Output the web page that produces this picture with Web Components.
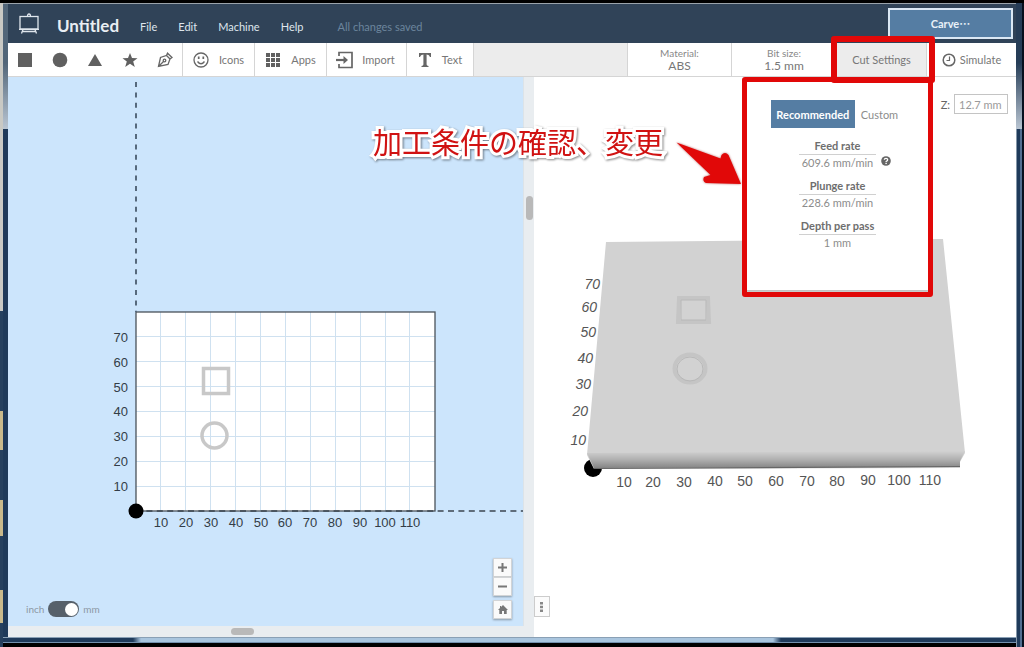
<!DOCTYPE html>
<html lang="en">
<head>
<meta charset="utf-8">
<title>Untitled</title>
<style>
html, body { margin: 0; height: 100%; }
body { background: #000; font-family: Lato, "Noto Sans CJK JP", sans-serif; font-size: 11px; color: #777; }
</style>
</head>
<body>
<carve-window>
  <app-header slot="header"></app-header>
  <tool-bar slot="toolbar"></tool-bar>
  <design-pane slot="design"></design-pane>
  <preview-pane slot="preview"></preview-pane>
</carve-window>

<script>
function define(name, html, setup) {
  const template = document.createElement('template');
  template.innerHTML = '<style>*{box-sizing:border-box}button,input{font:inherit;margin:0}:host{box-sizing:border-box}</style>' + html;
  customElements.define(name, class extends HTMLElement {
    constructor() {
      super();
      this.attachShadow({ mode: 'open' }).appendChild(template.content.cloneNode(true));
      if (setup) setup(this.shadowRoot, this);
    }
  });
}

/* Rate row of the cut settings panel */
define('rate-item', `
<style>
:host { display: block; width: 77px; text-align: center; font-size: 11px; line-height: 16px; color: #8c8c8c; position: relative; white-space: nowrap; }
dl, dt, dd { margin: 0; }
dt { font-weight: 700; color: #6e6e6e; border-bottom: 1px solid #d0d0d0; }
::slotted(button) { position: absolute; right: -15px; top: 18px; }
</style>
<dl><dt><slot name="label"></slot></dt><dd><slot></slot></dd></dl>
<slot name="help"></slot>`);

/* Panel that drops from the Cut Settings tool */
define('cut-panel', `
<style>
:host { display: flex; flex-direction: column; align-items: center; background: #fff; padding: 19px 0 42px; }
nav { display: flex; margin-bottom: 10px; }
nav button { height: 28px; border: 0; background: none; color: #8c8c8c; padding: 0 6px; }
nav button[aria-pressed=true] { background: #557da3; color: #fff; font-weight: 700; width: 84px; padding: 0; }
.rates { display: flex; flex-direction: column; gap: 7px; }
.help { border: 0; padding: 0; background: none; width: 10px; height: 10px; display: block; }
svg { display: block; }
</style>
<nav><button aria-pressed="true">Recommended</button><button aria-pressed="false">Custom</button></nav>
<div class="rates">
<rate-item><span slot="label">Feed rate</span>609.6 mm/min
<button slot="help" class="help" aria-label="Help"><svg width="10" height="10" viewBox="0 0 10 10"><circle cx="5" cy="5" r="4.8" fill="#666"/><path d="M3.3 3.8Q3.4 2.3 5 2.3T6.7 3.8Q6.7 4.7 5.2 5.5V6" fill="none" stroke="#fff" stroke-width="1.3"/><rect x="4.4" y="6.8" width="1.4" height="1.3" fill="#fff"/></svg></button></rate-item>
<rate-item><span slot="label">Plunge rate</span>228.6 mm/min</rate-item>
<rate-item><span slot="label">Depth per pass</span>1 mm</rate-item>
</div>`);

define('app-header', `
<style>
:host { display: flex; align-items: center; height: 39px; background: #304358; color: #e9eef3; padding: 0 3px 0 10px; }
.logo { display: block; margin-right: 17px; }
h1 { margin: 4px 0 0; font-size: 17px; line-height: 24px; font-weight: 700; color: #e9eef3; }
nav { display: flex; gap: 21px; margin: 6px 0 0 21px; }
nav button { border: 0; padding: 0; background: none; color: #dfe6ed; line-height: 16px; }
p { margin: 6px 0 0 34px; line-height: 16px; color: #6c859d; }
.carve { margin-left: auto; width: 125px; height: 31px; border: 2px solid #dbe8f4; background: #557da3; color: #e9f1f8; font-weight: 700; line-height: 16px; }
.carve span { font-family: "Noto Sans CJK JP", sans-serif; line-height: 1; }
</style>
<svg class="logo" width="22" height="22" viewBox="0 0 22 22" fill="none" stroke="#dfe6ed"><rect x="2" y="3.5" width="18" height="12.5" stroke-width="1.3"/><path d="M9.5 3.5Q9.5 1 11 1T12.5 3.5M1 16.3H21M5 16.5L3.5 20.5M17 16.5L18.5 20.5M4.5 18.5H17.5" stroke-width="1.3"/></svg>
<h1>Untitled</h1>
<nav><button>File</button><button>Edit</button><button>Machine</button><button>Help</button></nav>
<p>All changes saved</p>
<button class="carve">Carve<span lang="ja">…</span></button>`);

define('tool-bar', `
<style>
:host { display: flex; height: 34px; background: #ececec; border-bottom: 1px solid #d5d5d5; position: relative; z-index: 2; }
button { border: 0; border-right: 1px solid #d5d5d5; background: #fff; color: #777; padding: 0; display: flex; align-items: center; justify-content: center; white-space: nowrap; }
.shapes { display: flex; width: 175px; background: #fff; border-right: 1px solid #d5d5d5; }
.shapes button { flex: 1; border: 0; }
.icons, .apps { width: 72px; gap: 10px; }
.import { width: 80px; gap: 9px; padding-right: 2px; }
.text { width: 67px; gap: 10px; }
.setup, .bit { width: 105px; flex-direction: column; line-height: 14px; }
.setup { margin-left: auto; border-left: 1px solid #d5d5d5; }
small { font-size: 10px; line-height: 12px; color: #888; }
.setup b, .bit b { font-weight: 400; font-size: 12px; }
.cut { position: relative; width: 90px; display: flex; }
.cut > button { flex: 1; background: #ececec; }
cut-panel { position: absolute; top: 38px; right: -1px; width: 181px; height: 209px; box-shadow: 0 0 3px #8888; }
.mark { position: absolute; border: 6px solid #e10808; border-radius: 3px; pointer-events: none; }
.panel-mark { top: 34px; right: -6px; width: 191px; height: 220px; border-width: 5px; }
.tool-mark { top: -7px; right: -8px; width: 104px; height: 47px; }
.simulate { width: 89px; border: 0; gap: 4px; }
.note { position: absolute; right: 353px; top: 77px; margin: 0; font-size: 29px; line-height: 42px; font-weight: 400; color: #d01212; -webkit-text-stroke: 6px #fff; paint-order: stroke fill; filter: drop-shadow(1px 1px 1px #0007); white-space: nowrap; font-family: "Noto Sans CJK JP", sans-serif; }
.arrow { position: absolute; right: 273px; top: 96px; }
svg { display: block; flex: none; }
</style>
<div class="shapes">
<button aria-label="Square"><svg width="16" height="16"><rect x="1" y="1" width="14" height="14" fill="#606060"/></svg></button>
<button aria-label="Circle"><svg width="16" height="16"><circle cx="8" cy="8" r="7.3" fill="#606060"/></svg></button>
<button aria-label="Triangle"><svg width="16" height="16"><path d="M8 2L15 14H1Z" fill="#606060"/></svg></button>
<button aria-label="Star"><svg width="16" height="16"><path d="M8 1L10 6L15.5 6.2L11.2 9.5L12.8 15L8 11.8L3.2 15L4.8 9.5L.5 6.2L6 6Z" fill="#606060"/></svg></button>
<button aria-label="Pen"><svg width="16" height="16" fill="none" stroke="#666" stroke-width="1.3"><path d="M1.5 14.5L3.5 5.5L9.5 3.5L13 7L11 12.5ZM9.5 3.5L10.500 1.200L15 5.500L13 7M1.500 14.500L7 9"/><circle cx="7.500" cy="8.500" r="1.300"/></svg></button>
</div>
<button class="icons"><svg width="16" height="16" fill="none" stroke="#666" stroke-width="1.3"><circle cx="8" cy="8" r="7"/><path d="M4.5 9.5Q8 14 11.5 9.5"/><path d="M5.7 4.5V7M10.3 4.5V7" stroke-width="1.7"/></svg>Icons</button>
<button class="apps"><svg width="16" height="16" fill="#606060"><path d="M1 1h4v4H1zM6 1h4v4H6zM11 1h4v4h-4zM1 6h4v4H1zM6 6h4v4H6zM11 6h4v4h-4zM1 11h4v4H1zM6 11h4v4H6zM11 11h4v4h-4z"/></svg>Apps</button>
<button class="import"><svg width="17" height="18" fill="none" stroke="#666" stroke-width="1.7"><path d="M3 5V1.5H16V16.5H3V13"/><path d="M0 9H9" stroke-width="2.2"/><path d="M7.5 5L12 9L7.5 13Z" fill="#666" stroke="none"/></svg>Import</button>
<button class="text"><svg width="14" height="14" fill="#666"><path d="M1 0H13V4H12Q11.5 1.5 8.6 1.5V11.5Q8.6 12.7 10.5 13V14H3.5V13Q5.4 12.7 5.4 11.5V1.5Q2.5 1.5 2 4H1Z"/></svg>Text</button>
<button class="setup"><small>Material:</small><b>ABS</b></button>
<button class="bit"><small>Bit size:</small><b>1.5 mm</b></button>
<div class="cut"><button aria-expanded="true">Cut Settings</button>
<cut-panel></cut-panel><div class="mark panel-mark"></div><div class="mark tool-mark"></div></div>
<button class="simulate"><svg width="14" height="14" fill="none" stroke="#666" stroke-width="1.5"><circle cx="7" cy="7" r="5.8"/><path d="M7.5 3.5V7.5H4.5" stroke-width="1.2"/></svg>Simulate</button>
<p class="note" lang="ja">加工条件の確認、変更</p>
<svg class="arrow" width="68" height="50" viewBox="0 0 68 50"><path d="M1.5 3.5L45.5 19.5L46.5 16Q50 12 53.5 16L66 45L31 44Q27 42 29 38L35.5 36Z" fill="#e10808" style="filter:drop-shadow(0 0 1px #b66)"/></svg>`);

/* 2D drawing area with its rulers, zoom buttons and unit switch */
define('design-pane', `
<style>
:host { display: grid; grid-template: minmax(0,1fr) 11px / minmax(0,1fr) 11px; background: #e9edf0; min-width: 0; }
.canvas { position: relative; background: #cce5fc; overflow: hidden; }
.board { display: block; width: 100%; height: 100%; font: 13px "Liberation Sans", sans-serif; fill: #333d47; }
.y { text-anchor: end; } .x { text-anchor: middle; }
.vbar, .hbar { display: flex; justify-content: center; }
.vbar { border-left: 1px solid #dce3e8; padding-top: 119px; }
.vbar i { width: 7px; height: 24px; border-radius: 4px; background: #b9b9b9; }
.hbar { padding-right: 47px; align-items: center; }
.hbar i { width: 23px; height: 7px; border-radius: 4px; background: #b9b9b9; }
.units { position: absolute; left: 18px; bottom: 9px; display: flex; align-items: center; gap: 4px; font-size: 10px; line-height: 16px; color: #8c98a4; }
.units input { appearance: none; width: 31px; height: 16px; border-radius: 8px; background: #56606a; display: flex; align-items: center; justify-content: flex-end; padding: 1px; }
.units input::after { content: ""; width: 13px; height: 13px; border-radius: 50%; background: #fff; }
.zoom { position: absolute; right: 11px; bottom: 7px; display: flex; flex-direction: column; width: 19px; }
.zoom button { height: 19px; padding: 0; border: 1px solid #d2d4d6; background: #fafafa; display: grid; place-items: center; box-shadow: 0 1px 2px #0005; }
.zoom .home { margin-top: 4px; }
</style>
<div class="canvas">
<svg class="board" viewBox="0 0 515 549" preserveAspectRatio="xMinYMax meet">
<g id="plot"></g></svg>
<label class="units">inch<input type="checkbox" role="switch" aria-label="Millimetres" checked>mm</label>
<div class="zoom"><button aria-label="Zoom in"><svg width="9" height="9"><path d="M4.5 0V9M0 4.5H9" stroke="#777" stroke-width="2"/></svg></button>
<button aria-label="Zoom out"><svg width="9" height="9"><path d="M0 4.5H9" stroke="#777" stroke-width="2"/></svg></button>
<button class="home" aria-label="Home"><svg width="10" height="10" fill="#777"><path d="M5 0L10 5H8.7V9H6V6H4V9H1.3V5H0L2 3V1H3V2Z"/></svg></button></div>
</div>
<div class="vbar"><i></i></div>
<div class="hbar"><i></i></div><div></div>`, root => {
  const x0 = 128, y0 = 434, step = 24.9;
  let s = `<rect x="${x0}" y="235" width="299" height="199" fill="#fff"/><g stroke="#cfe1f0" stroke-width="1">`;
  for (let i = 1; i < 12; i++) s += `<path d="M${Math.floor(x0 + i * step) + .5} 235V434"/>`;
  for (let i = 1; i < 8; i++) s += `<path d="M128 ${Math.floor(y0 - i * step) + .5}H427"/>`;
  s += `</g><rect x="${x0}" y="235" width="299" height="199" fill="none" stroke="#4a5259" stroke-width="1.3"/>
  <path d="M128 5V235" stroke="#56697c" stroke-width="2" stroke-dasharray="5 5.4"/>
  <path d="M128 434H515" stroke="#3b4650" stroke-width="1.5" stroke-dasharray="6 4.4"/>
  <circle cx="128" cy="434" r="7.5" fill="#000"/>
  <rect x="195.5" y="291.5" width="25" height="25" fill="none" stroke="#c8c8c8" stroke-width="3.5"/>
  <circle cx="206.5" cy="358.5" r="12.5" fill="none" stroke="#c8c8c8" stroke-width="3.5"/>`;
  for (let i = 1; i < 8; i++) s += `<text class="y" x="120" y="${Math.round(y0 - i * step) + 5}">${i * 10}</text>`;
  for (let i = 1; i < 12; i++) s += `<text class="x" x="${Math.round(x0 + i * step)}" y="450">${i * 10}</text>`;
  root.getElementById('plot').innerHTML = s;
});

/* 3D material preview */
define('preview-pane', `
<style>
:host { display: block; position: relative; background: #fff; min-width: 0; overflow: hidden; }
.scene { display: block; width: 100%; height: 100%; font: 14px "Liberation Sans", sans-serif; fill: #555; }
.depth { position: absolute; top: 17px; right: 8px; display: flex; align-items: center; gap: 4px; color: #666; }
.depth input { width: 54px; height: 20px; border: 1px solid #c4c4c4; padding: 0 4px; color: #9a9a9a; background: #fff; }
.more { position: absolute; left: 0; bottom: 20px; width: 16px; height: 21px; padding: 0; border: 1px solid #ccc; background: #fbfbfb; display: grid; place-items: center; }
</style>
<svg class="scene" viewBox="0 0 482 560" preserveAspectRatio="xMidYMin meet">
<defs><linearGradient id="edge" x2="0" y2="1"><stop stop-color="#d2d2d2"/><stop offset=".5" stop-color="#b0b0b0"/><stop offset="1" stop-color="#858585"/></linearGradient></defs>
<circle cx="59" cy="391" r="9" fill="#000"/>
<path d="M72 165L409 162L431 376L426 385L426 391L60 392L53 378Z" fill="#d2d2d2"/>
<path d="M53 376L431 374L426 384V390L60 391Z" fill="url(#edge)"/><path d="M60 391.5L426 389.5" stroke="#666" stroke-width="1.2"/>
<g fill="none" stroke="#c5c5c5" stroke-width="4"><path d="M145 221H174L175 245H144Z"/><ellipse cx="156" cy="291.5" rx="15.5" ry="14"/></g>
<g fill="none" stroke="#b8b8b8" stroke-width="1"><path d="M147 223H172V243H147Z"/><ellipse cx="156" cy="292" rx="13" ry="12"/></g>
<g id="labels"></g></svg>
<label class="depth">Z: <input value="12.7 mm"></label>
<button class="more" aria-label="View options"><svg width="4" height="10" fill="#888"><path d="M0 0H3V2.5H0ZM0 3.7H3V6.2H0ZM0 7.4H3V9.9H0Z"/></svg></button>`, root => {
  const ys = [[46, 368], [48, 339], [51, 312], [53, 286], [56, 260], [57, 235], [60, 212]];
  const xs = [90, 119, 150, 181, 211, 242, 273, 303, 334, 365, 396];
  root.getElementById('labels').innerHTML =
    ys.map(([x, y], i) => `<text x="${x + 6}" y="${y}" text-anchor="end" font-style="italic">${(i + 1) * 10}</text>`).join('') +
    xs.map((x, i) => `<text x="${x}" y="${410 - Math.round(i / 5)}" text-anchor="middle">${(i + 1) * 10}</text>`).join('');
});

/* Desktop window frame around the application */
define('carve-window', `
<style>
:host { display: grid; grid-template: 3px minmax(0,1fr) 10px / 3px minmax(0,1fr) 8px; height: 100vh; background: #000; }
.desk { grid-area: 2/1/4/2; background: linear-gradient(#c9c9c4 0 308px,#26405e 0 408px,#c9b98a 0 447px,#26405e 0 497px,#c9b98a 0 533px,#26405e 0 587px,#c9b98a 0 620px,#26405e 0); }
.right { grid-area: 2/3/4/4; background: linear-gradient(90deg,#8496a8 0 1px,#1f3a5a 0 4px,#526f91 0 6px,#06101e 0); }
.right::before { content: ""; display: block; width: 6px; height: 126px; background: linear-gradient(#263d57 60px,#b9c5d2); }
.frame { grid-area: 2/2; display: grid; grid-template: auto auto minmax(0,1fr) / 526fr 482fr; border-top: 1px solid; border-left: 5px solid; border-image: linear-gradient(#9aa3ab 0 1px,#526679 0 60px,#b9c5d2 126px,#1f3a5a 0) 1 0 0 5; background: #fff; }
.bottom { grid-area: 3/2; height: 6px; border-top: 1px solid #8aa0b5; border-bottom: 1px solid #7390ad; background: linear-gradient(90deg,#1f3a5a 130px,#a9c5de 138px 770px,#1f3a5a 778px); }
::slotted([slot=header]), ::slotted([slot=toolbar]) { grid-column: 1 / -1; }
</style>
<div class="desk"></div>
<main class="frame"><slot name="header"></slot><slot name="toolbar"></slot><slot name="design"></slot><slot name="preview"></slot></main>
<div class="right"></div><div class="bottom"></div>`);
</script>
</body>
</html>
